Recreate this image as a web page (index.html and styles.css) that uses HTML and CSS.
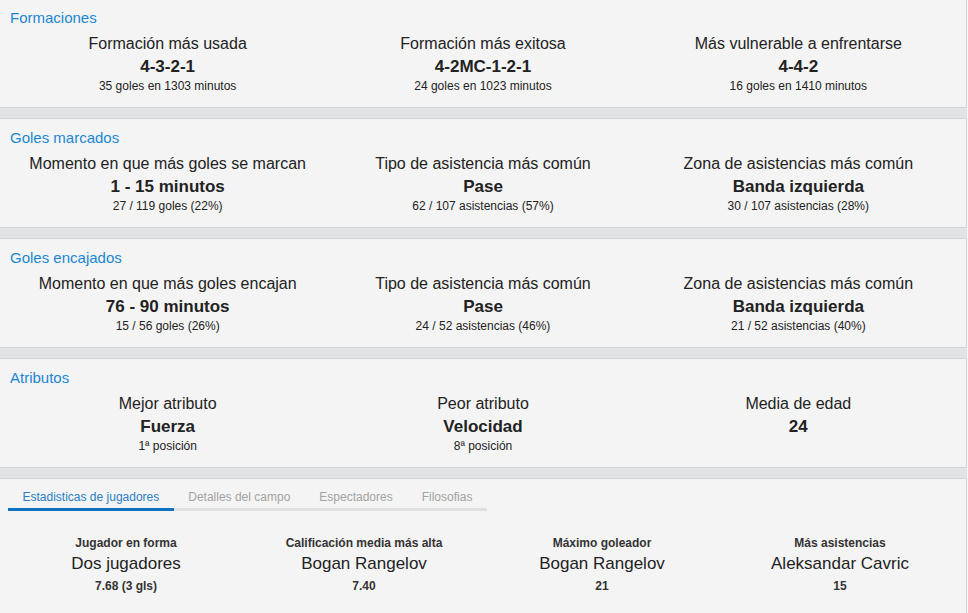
FILE: index.html
```html
<!DOCTYPE html>
<html lang="es">
<head>
<meta charset="utf-8">
<title>Estadísticas</title>
<link rel="stylesheet" href="styles.css">
</head>
<body>
<div class="page">
  <section class="panel">
    <h2 class="panel-title">Formaciones</h2>
    <div class="cols">
      <div class="stat"><div class="label">Formación más usada</div><div class="value">4-3-2-1</div><div class="note">35 goles en 1303 minutos</div></div>
      <div class="stat"><div class="label">Formación más exitosa</div><div class="value">4-2MC-1-2-1</div><div class="note">24 goles en 1023 minutos</div></div>
      <div class="stat"><div class="label">Más vulnerable a enfrentarse</div><div class="value">4-4-2</div><div class="note">16 goles en 1410 minutos</div></div>
    </div>
  </section>
  <section class="panel">
    <h2 class="panel-title">Goles marcados</h2>
    <div class="cols">
      <div class="stat"><div class="label">Momento en que más goles se marcan</div><div class="value">1 - 15 minutos</div><div class="note">27 / 119 goles (22%)</div></div>
      <div class="stat"><div class="label">Tipo de asistencia más común</div><div class="value">Pase</div><div class="note">62 / 107 asistencias (57%)</div></div>
      <div class="stat"><div class="label">Zona de asistencias más común</div><div class="value">Banda izquierda</div><div class="note">30 / 107 asistencias (28%)</div></div>
    </div>
  </section>
  <section class="panel">
    <h2 class="panel-title">Goles encajados</h2>
    <div class="cols">
      <div class="stat"><div class="label">Momento en que más goles encajan</div><div class="value">76 - 90 minutos</div><div class="note">15 / 56 goles (26%)</div></div>
      <div class="stat"><div class="label">Tipo de asistencia más común</div><div class="value">Pase</div><div class="note">24 / 52 asistencias (46%)</div></div>
      <div class="stat"><div class="label">Zona de asistencias más común</div><div class="value">Banda izquierda</div><div class="note">21 / 52 asistencias (40%)</div></div>
    </div>
  </section>
  <section class="panel">
    <h2 class="panel-title">Atributos</h2>
    <div class="cols">
      <div class="stat"><div class="label">Mejor atributo</div><div class="value">Fuerza</div><div class="note">1ª posición</div></div>
      <div class="stat"><div class="label">Peor atributo</div><div class="value">Velocidad</div><div class="note">8ª posición</div></div>
      <div class="stat"><div class="label">Media de edad</div><div class="value">24</div></div>
    </div>
  </section>
  <section class="panel panel-tabs">
    <nav class="tabs">
      <span class="tab active">Estadisticas de jugadores</span>
      <span class="tab">Detalles del campo</span>
      <span class="tab">Espectadores</span>
      <span class="tab">Filosofias</span>
    </nav>
    <div class="players">
      <div class="pstat"><div class="plabel">Jugador en forma</div><div class="pvalue">Dos jugadores</div><div class="pnote">7.68 (3 gls)</div></div>
      <div class="pstat"><div class="plabel">Calificación media más alta</div><div class="pvalue">Bogan Rangelov</div><div class="pnote">7.40</div></div>
      <div class="pstat"><div class="plabel">Máximo goleador</div><div class="pvalue">Bogan Rangelov</div><div class="pnote">21</div></div>
      <div class="pstat"><div class="plabel">Más asistencias</div><div class="pvalue">Aleksandar Cavric</div><div class="pnote">15</div></div>
    </div>
  </section>
</div>
</body>
</html>
```

FILE: styles.css
```css
html, body {
  margin: 0;
  padding: 0;
}
body {
  background: #f4f4f4;
  font-family: "Liberation Sans", Arial, sans-serif;
  color: #222;
}
.page {
  width: 967px;
  margin-top: -2px;
  background: #e2e3e4;
  display: flex;
  flex-direction: column;
  gap: 10px;
}
.panel {
  background: #f4f4f4;
  border: 1px solid #d3d4d5;
  border-left: none;
  padding: 10px 10px 13px 10px;
}
.panel-title {
  margin: 0;
  font-size: 15px;
  line-height: 18px;
  font-weight: normal;
  color: #1b87d3;
}
.cols {
  display: grid;
  grid-template-columns: repeat(3, 1fr);
  margin-top: 7px;
  text-align: center;
}
.label {
  font-size: 16px;
  line-height: 20px;
  color: #222;
}
.value {
  margin-top: 2px;
  font-size: 17px;
  line-height: 22px;
  font-weight: bold;
  color: #222;
}
.note {
  font-size: 12px;
  line-height: 16px;
  color: #222;
}
.panel-tabs {
  padding: 10px 8px 40px 8px;
}
.tabs {
  display: flex;
}
.tab {
  font-size: 12px;
  line-height: 16px;
  padding: 0 14.5px 3px 14.5px;
  color: #a3a3a3;
  border-bottom: 3px solid #e0e0e0;
}
.tab.active {
  color: #2a7fc7;
  border-bottom-color: #0d72c4;
}
.players {
  display: grid;
  grid-template-columns: repeat(4, 238px);
  margin-top: 24px;
  margin-left: -1px;
  text-align: center;
}
.plabel {
  font-size: 12px;
  line-height: 16px;
  font-weight: bold;
  color: #333;
}
.pvalue {
  margin-top: 2px;
  font-size: 17px;
  line-height: 22px;
  color: #222;
}
.pnote {
  margin-top: 3px;
  font-size: 12px;
  line-height: 16px;
  font-weight: bold;
  color: #333;
}
```
